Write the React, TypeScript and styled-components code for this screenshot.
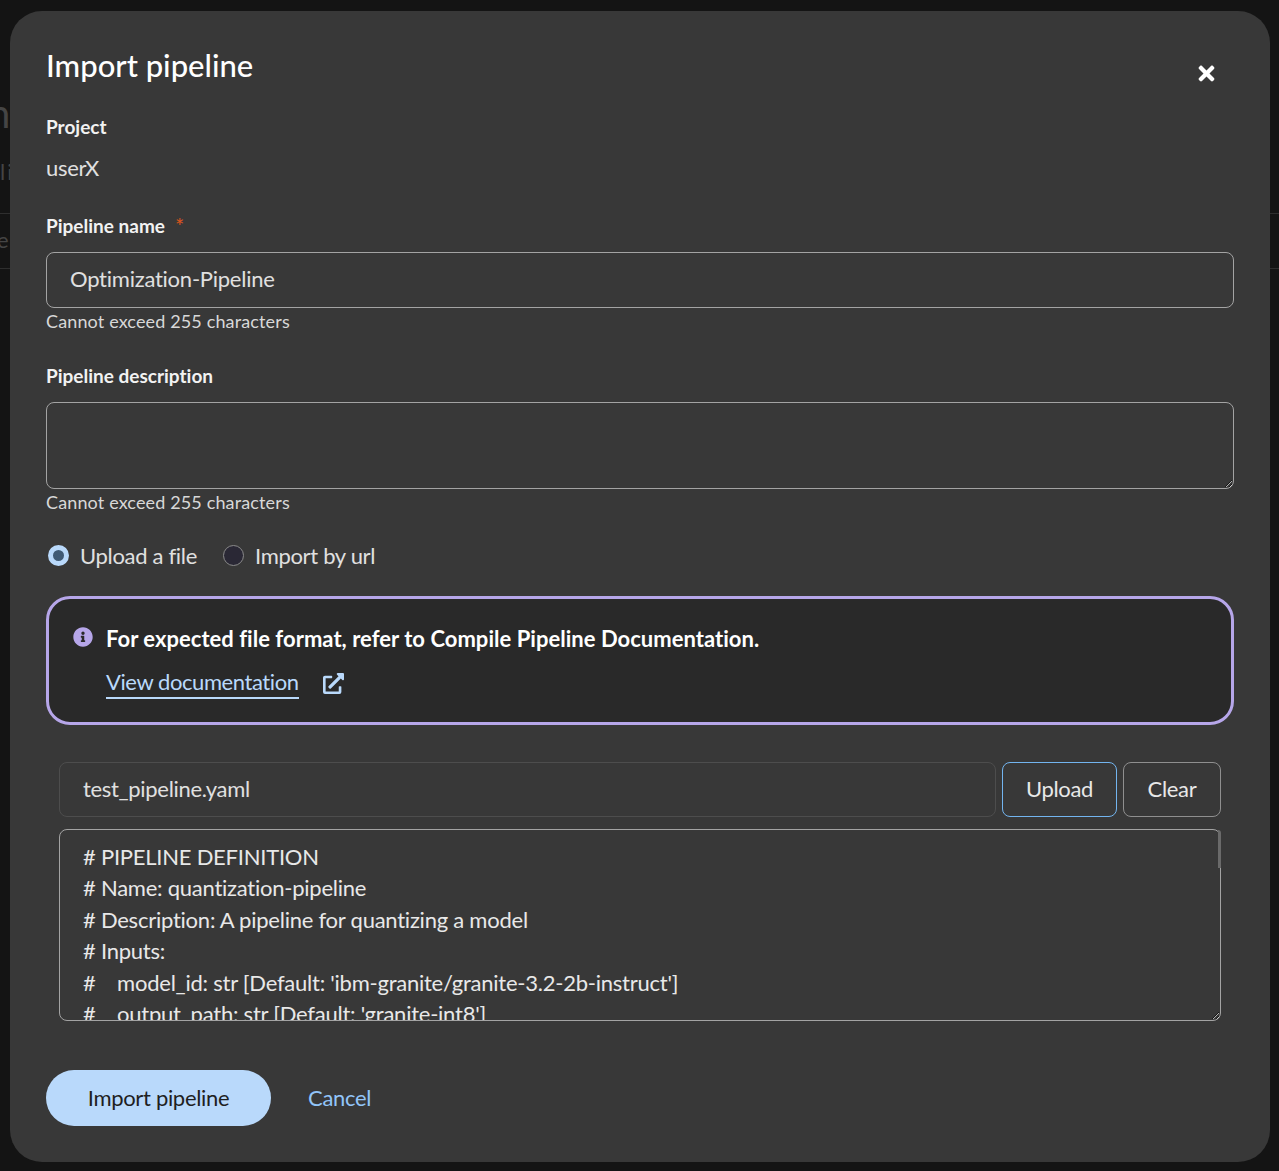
import React from 'react';
import styled, { createGlobalStyle, css } from 'styled-components';
import { FaExternalLinkAlt, FaInfoCircle, FaTimes } from 'react-icons/fa';

const yaml = `# PIPELINE DEFINITION
# Name: quantization-pipeline
# Description: A pipeline for quantizing a model
# Inputs:
#    model_id: str [Default: 'ibm-granite/granite-3.2-2b-instruct']
#    output_path: str [Default: 'granite-int8']
#    quantization_type: str [Default: 'int8']
components:
  comp-quantize-model:
    executorLabel: exec-quantize-model`;

const GlobalStyle = createGlobalStyle`
  html, body {
    margin: 0;
    height: 100%;
    background: #141414;
    overflow: hidden;
  }
  * {
    box-sizing: border-box;
  }
`;

const bodyText = css`
  font-size: 22px;
  letter-spacing: -0.32px;
  font-variant-ligatures: none;
`;

const Page = styled.div`
  height: 1171px;
  padding-top: 89px;
  overflow: hidden;
  font-family: Lato, "Liberation Sans", sans-serif;
  color: #454545;
`;

const PageTitle = styled.div`
  font-size: 40px;
  line-height: 48px;
  margin-left: -12px;
`;

const PageText = styled.div`
  font-size: 22px;
  line-height: 30px;
  letter-spacing: 2px;
  margin-top: 20px;
`;

const PageRow = styled.div`
  height: 56px;
  margin-top: 26px;
  border-top: 1px solid #2e2e2e;
  border-bottom: 1px solid #2e2e2e;
  font-size: 22px;
  line-height: 51px;
  padding-left: 0;
  text-indent: -3px;
`;

const Modal = styled.div`
  position: fixed;
  left: 10px;
  top: 11px;
  width: 1260px;
  height: 1151px;
  background: #383838;
  border-radius: 32px;
  padding: 32px 36px 36px;
  font-family: Lato, "Liberation Sans", sans-serif;
  color: #e0e0e0;
  display: flex;
  flex-direction: column;
  > * {
    flex-shrink: 0;
  }
`;

const Title = styled.h1`
  margin: 0;
  font-size: 31px;
  line-height: 44px;
  font-weight: 500;
  color: #fff;
`;

const CloseButton = styled.button`
  position: absolute;
  right: 52px;
  top: 50px;
  width: 24px;
  height: 24px;
  padding: 0;
  border: 0;
  background: none;
  color: #fff;
  display: flex;
  align-items: center;
  justify-content: center;
  font-size: 23px;
`;

const Label = styled.div<{ $top: number }>`
  margin-top: ${p => p.$top}px;
  font-size: 19px;
  line-height: 26px;
  font-weight: 700;
  color: #f2f2f2;
  font-variant-ligatures: none;
`;

const Required = styled.span`
  color: #d9541e;
  margin-left: 10px;
  font-weight: 400;
  font-size: 22px;
  line-height: 20px;
  position: relative;
  top: 1px;
`;

const Value = styled.div`
  ${bodyText}
  margin-top: 13px;
  line-height: 30px;
`;

const TextInput = styled.div`
  ${bodyText}
  letter-spacing: -0.24px;
  height: 56px;
  margin-top: 13px;
  border: 1px solid #a3a3a3;
  border-radius: 8px;
  padding: 0 23px;
  line-height: 52px;
`;

const DescriptionBox = styled.textarea`
  display: block;
  width: 100%;
  height: 87px;
  margin-top: 13px;
  border: 1px solid #a3a3a3;
  border-radius: 8px;
  background: none;
  resize: vertical;
  outline: none;
`;

const Helper = styled.div`
  font-size: 18px;
  line-height: 26px;
  letter-spacing: 0.14px;
  color: #d8d8d8;
`;

const RadioRow = styled.div`
  ${bodyText}
  display: flex;
  align-items: center;
  margin-top: 26px;
  height: 28px;
  padding-left: 2px;
`;

const RadioItem = styled.label`
  display: flex;
  align-items: center;
  gap: 11px;
  margin-right: 26px;
`;

const RadioDot = styled.span<{ $checked?: boolean }>`
  width: 21px;
  height: 21px;
  border-radius: 50%;
  background: ${p => (p.$checked ? '#3f5a75' : '#2a2835')};
  border: ${p => (p.$checked ? '5px solid #b9d9fb' : '1px solid #8a8a8a')};
`;

const Alert = styled.div`
  height: 129px;
  margin-top: 27px;
  border: 3px solid #b6a6e9;
  border-radius: 24px;
  background: #292929;
  padding: 25px 24px;
  display: grid;
  grid-template-columns: 33px 1fr;
  grid-template-rows: 30px 30px;
  row-gap: 14px;
`;

const AlertIcon = styled.div`
  color: #b6a6e9;
  font-size: 20px;
  display: flex;
  align-items: center;
  padding-bottom: 4px;
`;

const AlertTitle = styled.div`
  font-size: 22px;
  line-height: 30px;
  letter-spacing: 0.03px;
  font-weight: 700;
  color: #fff;
  font-variant-ligatures: none;
`;

const AlertLink = styled.a`
  ${bodyText}
  letter-spacing: -0.42px;
  grid-column: 2;
  display: flex;
  align-items: center;
  gap: 24px;
  color: #b9d9fb;
  line-height: 30px;
`;

const AlertLinkText = styled.span`
  border-bottom: 2px solid #b9d9fb;
`;

const FileRow = styled.div`
  display: flex;
  gap: 6px;
  height: 55px;
  margin: 37px 13px 0;
`;

const FileName = styled.div`
  ${bodyText}
  flex: 1;
  border: 1px solid #4d4d4d;
  border-radius: 8px;
  padding: 0 23px;
  line-height: 51px;
`;

const FileButton = styled.button<{ $active?: boolean }>`
  width: ${p => (p.$active ? 115 : 98)}px;
  padding: 0 0 2px;
  border: 1px solid ${p => (p.$active ? '#73b5f0' : '#8f8f8f')};
  border-radius: 8px;
  background: none;
  color: #e8e8e8;
  font: inherit;
  ${bodyText}
`;

const CodeWrap = styled.div`
  position: relative;
  margin: 12px 13px 0;
  height: 192px;
`;

const CodeBox = styled.textarea`
  ${bodyText}
  letter-spacing: -0.24px;
  display: block;
  width: 100%;
  height: 100%;
  padding: 11px 23px 0;
  border: 1px solid #a3a3a3;
  border-radius: 8px;
  background: none;
  color: #e8e8e8;
  font-family: Lato, "Liberation Sans", sans-serif;
  line-height: 31.4px;
  outline: none;
  resize: vertical;
  white-space: pre;
  overflow: hidden;
`;

const ScrollThumb = styled.span`
  position: absolute;
  top: 1px;
  right: 0;
  width: 3px;
  height: 38px;
  background: #6a6a6a;
  border-radius: 0 6px 0 0;
`;

const Footer = styled.div`
  display: flex;
  align-items: center;
  margin-top: 49px;
`;

const PrimaryButton = styled.button`
  width: 225px;
  height: 56px;
  padding: 0 0 2px;
  border: 0;
  border-radius: 28px;
  background: #b9d9fb;
  color: #1f1f1f;
  font: inherit;
  ${bodyText}
`;

const CancelButton = styled.button`
  margin-left: 37px;
  padding: 0 0 2px;
  border: 0;
  background: none;
  color: #92c5f9;
  font: inherit;
  ${bodyText}
`;

export default function App() {
  return (
    <>
      <GlobalStyle />
      <Page>
        <PageTitle>n</PageTitle>
        <PageText>li</PageText>
        <PageRow>e</PageRow>
      </Page>
      <Modal>
        <Title>Import pipeline</Title>
        <CloseButton aria-label="Close">
          <FaTimes />
        </CloseButton>
        <Label $top={27}>Project</Label>
        <Value>userX</Value>
        <Label $top={30}>
          Pipeline name<Required>*</Required>
        </Label>
        <TextInput>Optimization-Pipeline</TextInput>
        <Helper>Cannot exceed 255 characters</Helper>
        <Label $top={29}>Pipeline description</Label>
        <DescriptionBox />
        <Helper>Cannot exceed 255 characters</Helper>
        <RadioRow>
          <RadioItem>
            <RadioDot $checked />
            Upload a file
          </RadioItem>
          <RadioItem>
            <RadioDot />
            Import by url
          </RadioItem>
        </RadioRow>
        <Alert>
          <AlertIcon>
            <FaInfoCircle />
          </AlertIcon>
          <AlertTitle>For expected file format, refer to Compile Pipeline Documentation.</AlertTitle>
          <AlertLink>
            <AlertLinkText>View documentation</AlertLinkText>
            <FaExternalLinkAlt size={21} />
          </AlertLink>
        </Alert>
        <FileRow>
          <FileName>test_pipeline.yaml</FileName>
          <FileButton $active>Upload</FileButton>
          <FileButton>Clear</FileButton>
        </FileRow>
        <CodeWrap>
          <CodeBox readOnly defaultValue={yaml} />
          <ScrollThumb />
        </CodeWrap>
        <Footer>
          <PrimaryButton>Import pipeline</PrimaryButton>
          <CancelButton>Cancel</CancelButton>
        </Footer>
      </Modal>
    </>
  );
}
